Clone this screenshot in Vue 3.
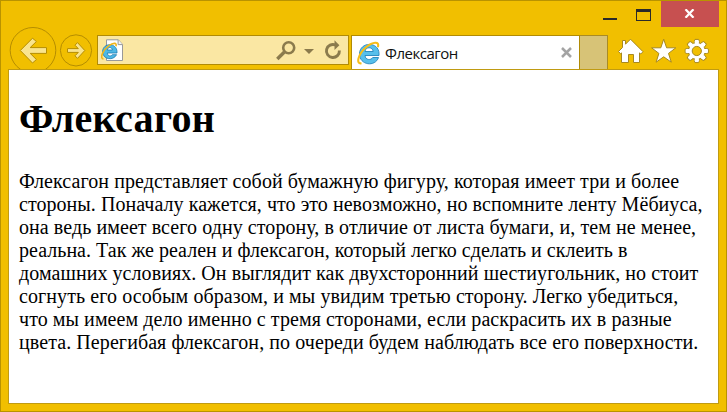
<script setup>
const title = 'Флексагон'
const lines = [
  { text: 'Флексагон представляет собой бумажную фигуру, которая имеет три и более', spacing: 0.09 },
  { text: 'стороны. Поначалу кажется, что это невозможно, но вспомните ленту Мёбиуса,', spacing: 0.05 },
  { text: 'она ведь имеет всего одну сторону, в отличие от листа бумаги, и, тем не менее,', spacing: 0.07 },
  { text: 'реальна. Так же реален и флексагон, который легко сделать и склеить в', spacing: 0.02 },
  { text: 'домашних условиях. Он выглядит как двухсторонний шестиугольник, но стоит', spacing: 0.06 },
  { text: 'согнуть его особым образом, и мы увидим третью сторону. Легко убедиться,', spacing: 0.08 },
  { text: 'что мы имеем дело именно с тремя сторонами, если раскрасить их в разные', spacing: 0.07 },
  { text: 'цвета. Перегибая флексагон, по очереди будем наблюдать все его поверхности.', spacing: 0.08 },
]
const teeth = [0, 45, 90, 135, 180, 225, 270, 315]
</script>

<template>
  <div class="window">
    <header class="titlebar">
      <svg class="minimize" width="14" height="20"><path d="M0 18h14v2H0z" fill="#2a2a2a" /></svg>
      <svg class="maximize" width="15" height="12"><path fill-rule="evenodd" d="M0 0h15v12H0zM1 3h13v8H1z" fill="#2a2a2a" /></svg>
      <button class="close" aria-label="Закрыть">
        <svg width="11" height="9"><path d="M1.5 .3 9.5 8.7M9.5 .3 1.5 8.7" stroke="#fff" stroke-width="2.3" /></svg>
      </button>
    </header>

    <nav class="toolbar">
      <svg class="history" width="96" height="42" viewBox="0 27 96 42">
        <g stroke="#b58d00" fill="none">
          <circle cx="33" cy="50.3" r="22.8" />
          <circle cx="76" cy="50.4" r="15.6" />
        </g>
        <g fill="#f9e48e" stroke="#b58d00">
          <path d="M20.3 50.5 32.5 38.2 36.4 41.5 30.2 47.6H46.5V53.4H30.2L36.4 59.5 32.5 63Z" />
          <path d="M84.8 50.5 77.5 42.6 75 45.2 78.3 48.6H67.5V52.4H78.3L75 55.8 77.5 58.4Z" />
        </g>
      </svg>

      <div class="address">
        <svg class="page-icon" width="23" height="23" viewBox="0 0 23 23">
          <path d="M5.5.8h11.8l4.2 4.6v16.1h-16z" fill="#fff" stroke="#999" />
          <path d="M17.1.8v4.8h4.4" fill="#f3f3f3" stroke="#999" />
          <path fill-rule="evenodd" d="M16 12.8V14H6.3C6.5 17.6 10.3 17.5 11.3 15.7H15.6C12.4 22 1.8 20.8 1.6 12.7 1.8 3.3 15.8 3.4 16 12.8ZM6.3 11H11.4C11.1 7.7 6.5 7.7 6.3 11Z" fill="#4fb9e6" stroke="#1b7bb2" stroke-width=".8" />
          <path d="M2.5 20C-1.6 19.5 1.6 11.2 8 6.7 12.2 3.4 16.2 3.6 14.9 7.2" fill="none" stroke="#f1b51b" stroke-width="1.6" />
        </svg>
        <svg class="address-tools" width="70" height="24" viewBox="0 0 70 24">
          <g fill="none" stroke="#8b7b4c">
            <circle cx="14.7" cy="7.8" r="5.5" stroke-width="2.6" />
            <path d="M10.4 12 3.3 19" stroke-width="3.4" />
            <path d="M61.5 5A6.5 6.5 0 1 0 65.4 10.5" stroke-width="2.9" />
          </g>
          <path d="M30 9h10L35 14z" fill="#8b7b4c" />
          <path d="M60.5 .3 65.4 5.2 60.5 10z" fill="#8b7b4c" />
        </svg>
      </div>

      <div class="tab">
        <svg class="tab-icon" width="24" height="24" viewBox="0 0 24 24">
          <path fill-rule="evenodd" d="M22 12.5V14.5H8C8.2 19.4 14.4 19.4 15.7 16.5H21.5C18.3 26.2 2.5 24.5 2.5 12.8 2.8.4 21.7.2 22 12.5ZM8 10.5H16.2C15.8 5.5 8.3 5.5 8 10.5Z" fill="#57bfeb" stroke="#2386bd" stroke-width=".9" />
          <path d="M4.5 22.3C-1.5 23.3 1.2 13.2 9 6.3 15.5.9 23-.4 20.8 6.2" fill="none" stroke="#f6bd19" stroke-width="2.1" />
        </svg>
        <span class="tab-title">{{ title }}</span>
        <svg class="tab-close" width="11" height="11"><path d="M1 1 10 10M10 1 1 10" stroke="#a4a4a4" stroke-width="2.5" /></svg>
      </div>
      <div class="new-tab"></div>

      <svg class="commands" width="94" height="28" viewBox="0 0 94 28">
        <g fill="#fff" stroke="#a78920">
          <path d="M1.5 14.5 5.5 10.5V3.5H8.5V7.2L13.5 2.2 26 14.7 23.8 17 22.5 15.9V25.5H16.5V17.5H11.5V25.5H4.5V15.9L3.5 16.7Z" />
          <path d="M46.7 2.2 49.6 10.8H58.8L51.5 16.4 54.3 25.2 46.7 19.8 39.1 25.2 41.9 16.4 34.6 10.8H43.8Z" />
        </g>
        <g transform="translate(79.8 14)">
          <g v-for="angle in teeth" :key="angle" :transform="`rotate(${angle})`">
            <path d="M-2.5-7V-9.5L-1.8-11.6H1.8L2.5-9.5V-7" fill="#fff" stroke="#a78920" />
          </g>
          <circle r="8.3" fill="#fff" stroke="#a78920" stroke-width=".8" />
          <g v-for="angle in teeth" :key="`fill-${angle}`" :transform="`rotate(${angle})`">
            <path d="M-2-6.8V-9.3L-1.4-11H1.4L2-9.3V-6.8Z" fill="#fff" />
          </g>
          <circle r="4.6" fill="#f1bf00" stroke="#a78920" />
        </g>
      </svg>
    </nav>

    <main class="page">
      <h1>{{ title }}</h1>
      <p>
        <span v-for="line in lines" :key="line.text" class="line" :style="{ letterSpacing: `${line.spacing}px` }">{{ line.text }}</span>
      </p>
    </main>
  </div>
</template>

<style>
body { margin: 0; overflow: hidden; }
</style>

<style scoped>
.window {
  box-sizing: border-box;
  width: 727px;
  height: 412px;
  display: flex;
  flex-direction: column;
  padding: 0 7px 7px;
  border: 1px solid #b99300;
  background: #f1bf00;
}
svg { display: block; flex: none; }
.titlebar { height: 26px; display: flex; align-items: flex-start; justify-content: flex-end; }
.maximize { margin: 8px 10px 0 19px; }
.close {
  display: flex;
  align-items: center;
  justify-content: center;
  width: 58px;
  height: 26px;
  margin: 0;
  padding: 0 1px 2px 0;
  border: 0;
  background: #c75050;
}
.minimize { margin-top: -1px; }
.toolbar { height: 42px; flex: none; display: flex; align-items: flex-start; margin-left: -8px; }
.history { margin-right: 1px; }
.address {
  box-sizing: border-box;
  width: 252px;
  height: 30px;
  display: flex;
  justify-content: space-between;
  margin-top: 8px;
  padding: 3px 4px 0 3px;
  border: 1px solid #b18b05;
  background: #fae7a3;
}
.address-tools { margin-top: 1px; }
.tab {
  box-sizing: border-box;
  width: 229px;
  height: 34px;
  display: flex;
  align-items: center;
  margin: 8px 0 0 2px;
  padding: 0 7px 0 5px;
  border: 1px solid #b18b05;
  border-bottom: 0;
  background: #fff;
}
.tab-title { margin-left: 4px; flex: 1; font: 15px/20px "Open Sans", "Noto Sans", sans-serif; letter-spacing: -.5px; color: #111; }
.new-tab {
  box-sizing: border-box;
  width: 28px;
  height: 34px;
  margin-top: 8px;
  border: 1px solid #a98b25;
  border-width: 1px 1px 0 0;
  background: #d7c377;
}
.commands { margin: 10px 0 0 9px; }
.page {
  box-sizing: border-box;
  flex: 1;
  padding: 0 10px;
  border: 1px solid #c09b12;
  background: #fff;
  color: #000;
  font-family: "Liberation Serif", serif;
}
h1 { margin: 26px 0 0; font-size: 40px; line-height: 46px; letter-spacing: .35px; }
p { margin: 28px 0 0; font-size: 20px; line-height: 23px; }
.line { display: block; white-space: nowrap; }
</style>
